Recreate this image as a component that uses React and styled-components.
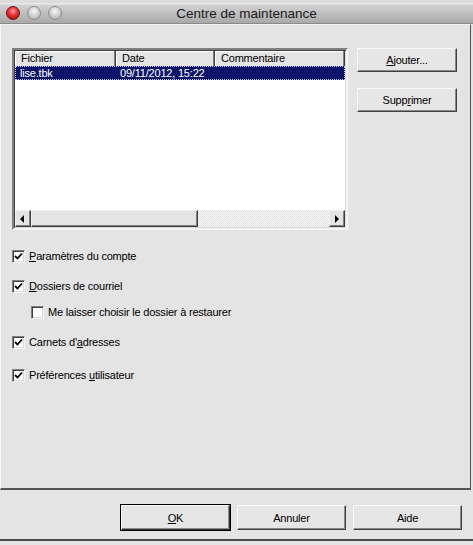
import React from "react";
import styled, { createGlobalStyle, css } from "styled-components";

const Global = createGlobalStyle`
  html, body { margin: 0; padding: 0; background: #e4e4e4; }
  body { font-family: "Liberation Sans", Arial, sans-serif; font-size: 11px; letter-spacing: -0.2px; color: #000; }
  * { box-sizing: border-box; }
`;

const Window = styled.div`
  width: 473px;
  height: 545px;
  background: #e4e4e4;
  display: flex;
  flex-direction: column;
  overflow: hidden;
`;

const TitleBar = styled.div`
  height: 24px;
  flex: none;
  position: relative;
  display: flex;
  align-items: center;
  justify-content: center;
  background: linear-gradient(#dcdcdc 0 3px, #e9e9e9 3px 4px, #d2d2d2 5px, #a8a8a8 100%);
  border-bottom: 1px solid #8a8a8a;
`;

const Lights = styled.div`
  position: absolute;
  left: 6px;
  top: 6px;
  display: flex;
  gap: 7px;
`;

const Light = styled.span`
  width: 14px;
  height: 14px;
  border-radius: 50%;
  border: 1px solid ${(p) => (p.$red ? "#7a1010" : "#8c8c8c")};
  background: ${(p) =>
    p.$red
      ? "radial-gradient(circle at 50% 35%, #ffb0b0 0, #f04040 35%, #b80c0c 80%, #d83030 100%)"
      : "radial-gradient(circle at 50% 35%, #f6f6f6 0, #d4d4d4 45%, #b0b0b0 85%, #c8c8c8 100%)"};
`;

const Title = styled.div`
  font-family: "Liberation Sans", Arial, sans-serif;
  font-size: 13.5px;
  letter-spacing: 0;
  color: #1a1a1a;
  padding-top: 3px;
  padding-left: 20px;
`;

const Panel = styled.div`
  width: 471px;
  height: 466px;
  flex: none;
  border-top: 1px solid #f2f2f2;
  border-left: 1px solid #f8f8f8;
  border-right: 1px solid #505050;
  border-bottom: 2px solid #555;
  padding: 23px 0 0 11px;
  display: flex;
  flex-direction: column;
`;

const TopRow = styled.div`
  display: flex;
  align-items: flex-start;
`;

const ListBox = styled.div`
  width: 336px;
  height: 182px;
  border: 2px solid;
  border-color: #808080 #f4f4f4 #f4f4f4 #808080;
  box-shadow: inset 1px 1px #404040, inset -1px -1px #d8d8d8;
  background: #fff;
  display: flex;
  flex-direction: column;
  padding: 0 1px 1px 1px;
`;

const Header = styled.div`
  height: 16px;
  display: flex;
  flex: none;
  padding-top: 1px;
`;

const HeaderCell = styled.div`
  width: ${(p) => p.$w}px;
  flex: ${(p) => (p.$grow ? 1 : "none")};
  background: #e4e4e4;
  border-right: 1px solid #404040;
  box-shadow: inset -1px 0 #808080, inset 1px 1px #fff;
  padding-left: 6px;
  line-height: 15px;
  white-space: nowrap;
  overflow: hidden;
`;

const Rows = styled.div`
  flex: 1;
  background: #fff;
`;

const Row = styled.div`
  height: 14px;
  display: flex;
  line-height: 12px;
  ${(p) =>
    p.$selected &&
    css`
      background: #0c156a;
      color: #fff;
      border: 1px dotted #c8c8ff;
    `}
`;

const Cell = styled.div`
  width: ${(p) => p.$w}px;
  flex: none;
  padding-left: ${(p) => p.$pad}px;
  white-space: nowrap;
`;

const HScroll = styled.div`
  height: 17px;
  flex: none;
  display: flex;
`;

const ScrollBtn = styled.div`
  width: 16px;
  height: 17px;
  background: #e4e4e4;
  border: 1px solid;
  border-color: #f0f0f0 #404040 #404040 #f0f0f0;
  box-shadow: inset -1px -1px #808080;
  display: flex;
  align-items: center;
  justify-content: center;
`;

const Thumb = styled.div`
  width: 167px;
  height: 17px;
  background: #e4e4e4;
  border: 1px solid;
  border-color: #f0f0f0 #404040 #404040 #f0f0f0;
  box-shadow: inset -1px -1px #808080;
`;

const Track = styled.div`
  flex: 1;
  height: 17px;
  background: repeating-conic-gradient(#ffffff 0 25%, #dcdcdc 0 50%) 0 0 / 2px 2px;
`;

const SideButtons = styled.div`
  margin-left: 9px;
  display: flex;
  flex-direction: column;
  gap: 16px;
`;

const Button = styled.div`
  width: ${(p) => p.$w}px;
  height: ${(p) => p.$h}px;
  background: #e6e6e6;
  border: 1px solid;
  border-color: #fafafa #404040 #404040 #fafafa;
  box-shadow: inset -1px -1px #8a8a8a;
  display: flex;
  align-items: center;
  justify-content: center;
  font-size: 11px;
  ${(p) =>
    p.$default &&
    css`
      outline: 1px solid #000;
      border-color: #fafafa #303030 #303030 #fafafa;
    `}
`;

const U = styled.span`
  text-decoration: underline;
  text-underline-offset: 1px;
`;

const Options = styled.div`
  display: flex;
  flex-direction: column;
`;

const OptionRow = styled.div`
  height: 14px;
  display: flex;
  align-items: center;
  gap: 4px;
  margin-top: ${(p) => p.$mt}px;
  padding-left: ${(p) => p.$indent || 0}px;
  white-space: nowrap;
`;

const Box = styled.span`
  width: 13px;
  height: 13px;
  flex: none;
  background: #fff;
  border: 1px solid;
  border-color: #808080 #f4f4f4 #f4f4f4 #808080;
  box-shadow: inset 1px 1px #404040, inset -1px -1px #d8d8d8;
  display: flex;
  align-items: center;
  justify-content: center;
`;

const Footer = styled.div`
  height: 51px;
  flex: none;
  border-bottom: 2px solid #4a4a4a;
  display: flex;
  justify-content: flex-end;
  gap: 7px;
  padding: 15px 11px 0 0;
`;

const Arrow = ({ dir }) => (
  <svg width="6" height="8" viewBox="0 0 6 8">
    {dir === "left" ? <polygon points="4,0 4,8 0,4" fill="#000" /> : <polygon points="1,0 1,8 5,4" fill="#000" />}
  </svg>
);

const Check = () => (
  <svg width="9" height="9" viewBox="0 0 9 9">
    <polyline points="1,4 3.5,6.5 8,1.5" fill="none" stroke="#000" strokeWidth="1.8" />
  </svg>
);

const Option = ({ checked, mt, indent, children }) => (
  <OptionRow $mt={mt} $indent={indent}>
    <Box>{checked && <Check />}</Box>
    <span>{children}</span>
  </OptionRow>
);

export default function App() {
  return (
    <>
      <Global />
      <Window>
        <TitleBar>
          <Lights>
            <Light $red />
            <Light />
            <Light />
          </Lights>
          <Title>Centre de maintenance</Title>
        </TitleBar>
        <Panel>
          <TopRow>
            <ListBox>
              <Header>
                <HeaderCell $w={101}>Fichier</HeaderCell>
                <HeaderCell $w={99}>Date</HeaderCell>
                <HeaderCell $grow>Commentaire</HeaderCell>
              </Header>
              <Rows>
                <Row $selected>
                  <Cell $w={100} $pad={4}>lise.tbk</Cell>
                  <Cell $w={120} $pad={4}>09/11/2012, 15:22</Cell>
                </Row>
              </Rows>
              <HScroll>
                <ScrollBtn>
                  <Arrow dir="left" />
                </ScrollBtn>
                <Thumb />
                <Track />
                <ScrollBtn>
                  <Arrow dir="right" />
                </ScrollBtn>
              </HScroll>
            </ListBox>
            <SideButtons>
              <Button $w={100} $h={24}>
                <span>
                  <U>A</U>jouter...
                </span>
              </Button>
              <Button $w={100} $h={24}>
                <span>
                  Supp<U>r</U>imer
                </span>
              </Button>
            </SideButtons>
          </TopRow>
          <Options>
            <Option checked mt={19}>
              <U>P</U>aramètres du compte
            </Option>
            <Option checked mt={16}>
              <U>D</U>ossiers de courriel
            </Option>
            <Option mt={12} indent={19}>
              Me laisser choisir le dossier à restaurer
            </Option>
            <Option checked mt={16}>
              Carnets d'<U>a</U>dresses
            </Option>
            <Option checked mt={19}>
              Préférences <U>u</U>tilisateur
            </Option>
          </Options>
        </Panel>
        <Footer>
          <Button $w={109} $h={25} $default>
            <span>
              <U>O</U>K
            </span>
          </Button>
          <Button $w={109} $h={25}>Annuler</Button>
          <Button $w={109} $h={25}>Aide</Button>
        </Footer>
      </Window>
    </>
  );
}
